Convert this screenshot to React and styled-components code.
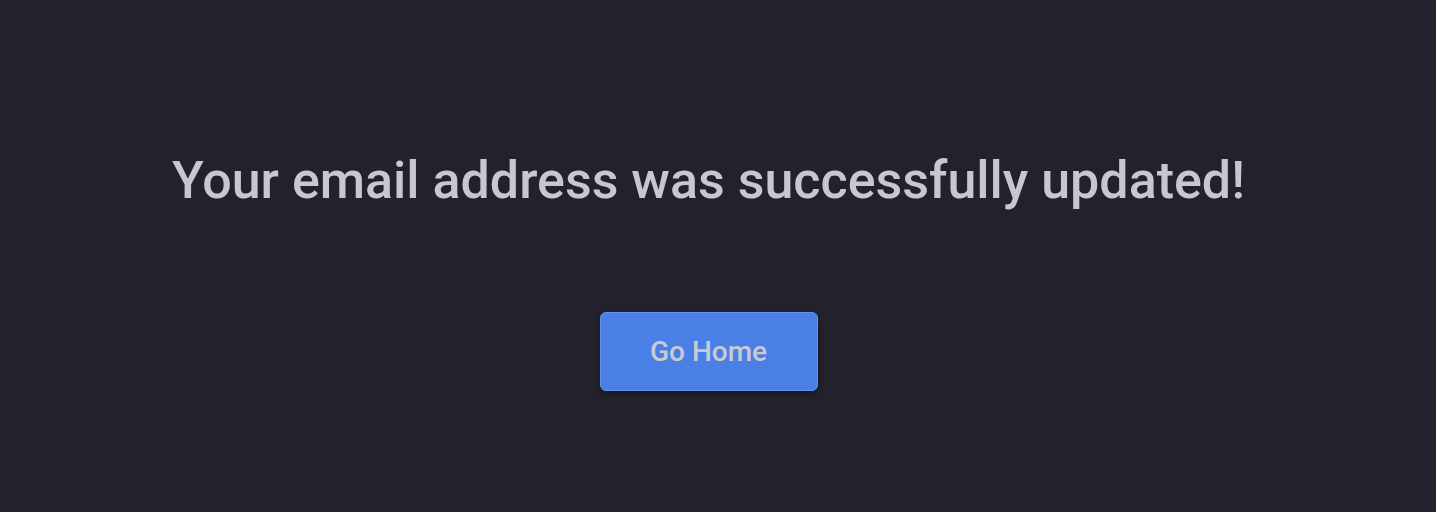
import React from "react";
import styled, { createGlobalStyle } from "styled-components";

const GlobalStyle = createGlobalStyle`
  html, body {
    margin: 0;
    padding: 0;
    background: #22222c;
  }
  body {
    font-family: Roboto, "Liberation Sans", sans-serif;
  }
`;

const Page = styled.main`
  box-sizing: border-box;
  min-height: 512px;
  padding: 148px 19px 0 0;
  display: flex;
  flex-direction: column;
  align-items: center;
`;

const Title = styled.h1`
  margin: 0;
  font-size: 52px;
  font-weight: 500;
  line-height: 66px;
  color: #c6c7d1;
`;

const HomeButton = styled.button`
  margin-top: 98px;
  width: 218px;
  height: 79px;
  border: 1px solid #5f92f3;
  border-radius: 6px;
  background: #4a80e6;
  color: #c9cbd3;
  font-family: inherit;
  font-size: 28px;
  font-weight: 500;
  padding: 0;
  box-shadow: 0 3px 6px rgba(0, 0, 0, 0.35);
  cursor: pointer;
`;

export default function App() {
  return (
    <>
      <GlobalStyle />
      <Page>
        <Title>Your email address was successfully updated!</Title>
        <HomeButton type="button">Go Home</HomeButton>
      </Page>
    </>
  );
}
